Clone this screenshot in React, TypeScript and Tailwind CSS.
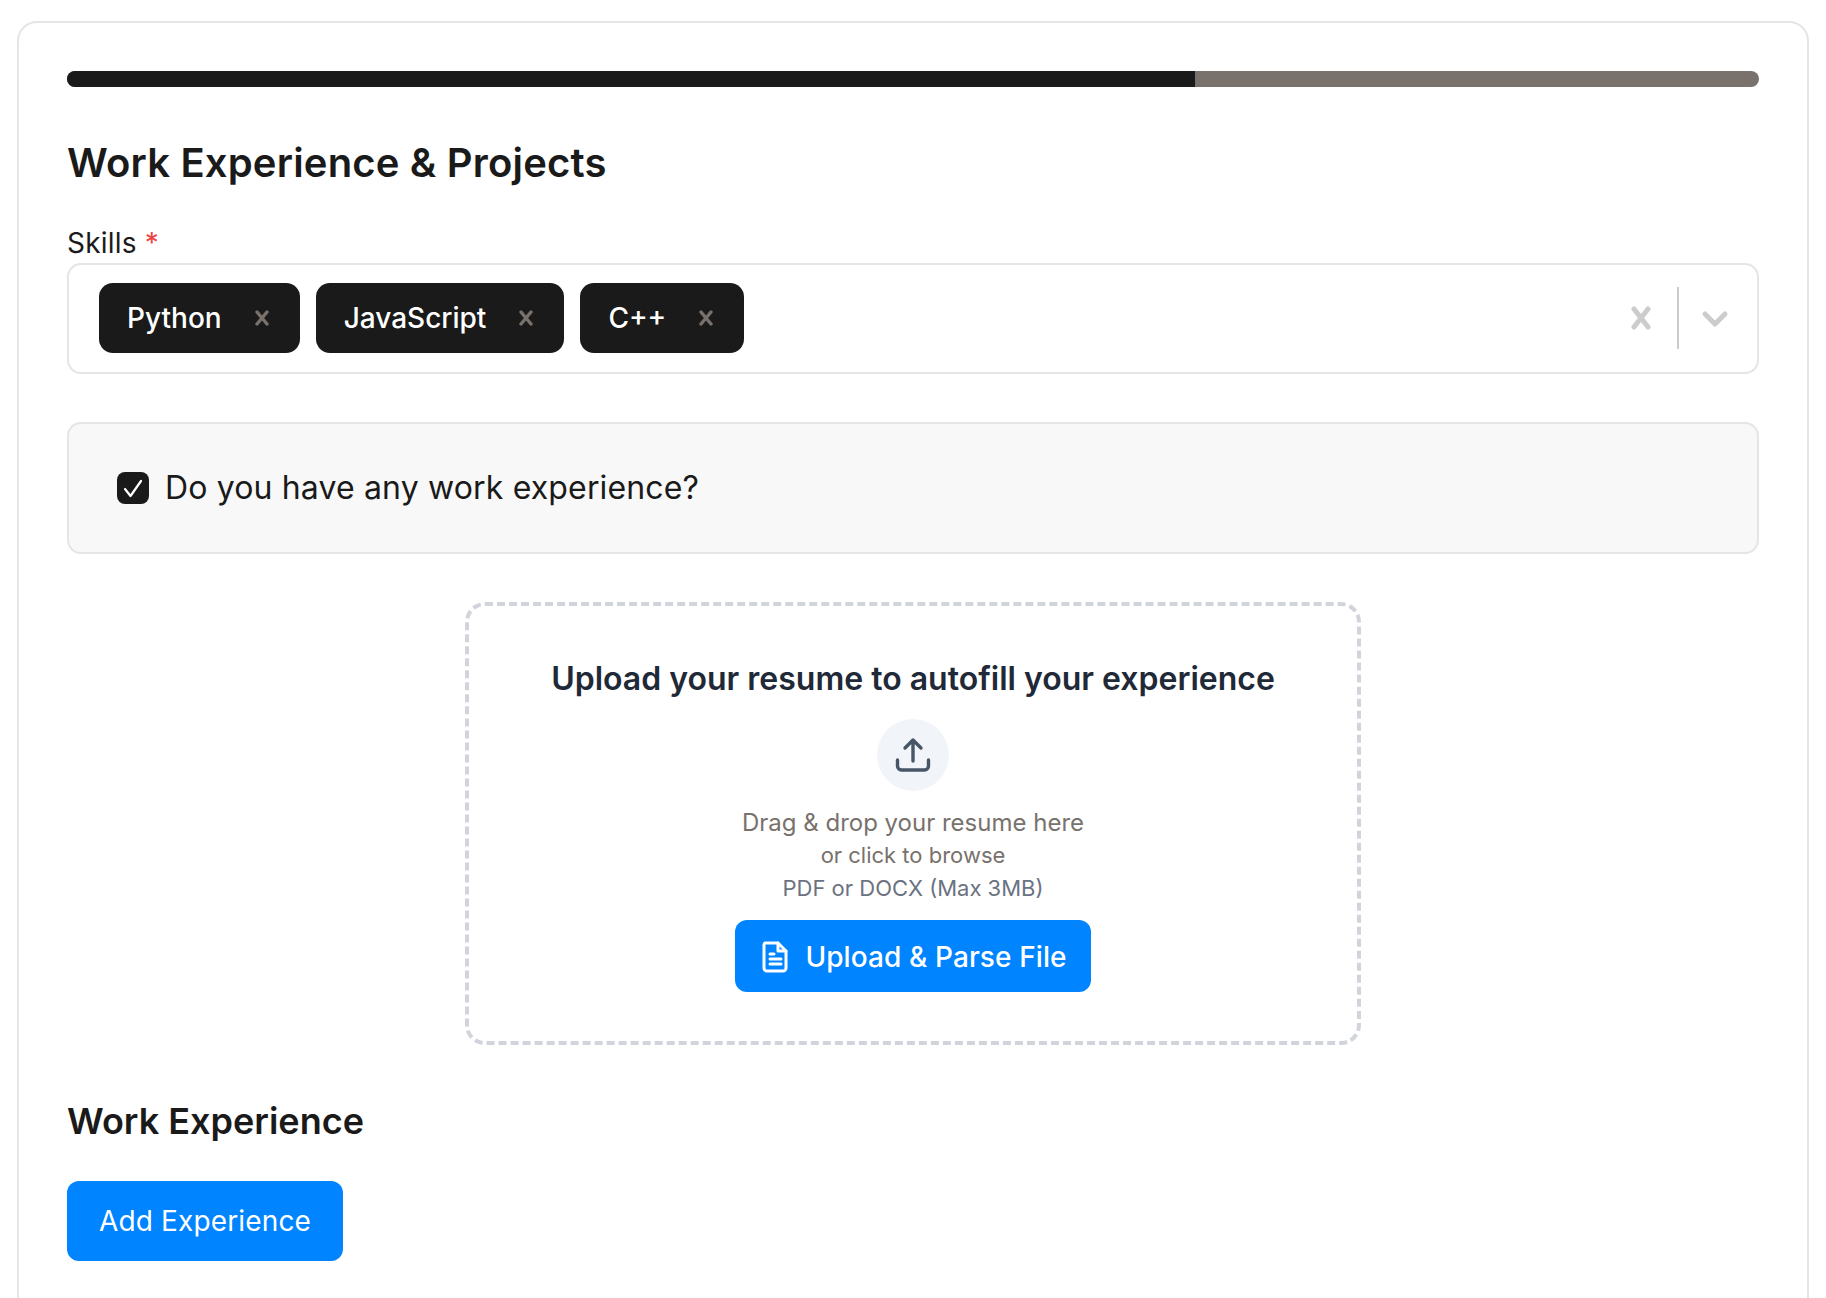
import React from "react";

function ChipX() {
  return (
    <svg width="14" height="16" viewBox="0 0 14 16" fill="none" stroke="#78716c" strokeWidth="3.4" strokeLinecap="round" className="ml-[33px]">
      <path d="M2 2 L12 14 M12 2 L2 14" />
    </svg>
  );
}

function Chip({ label }: { label: string }) {
  return (
    <div className="flex h-[70px] items-center rounded-[14px] bg-[#1a1a1a] pl-[28px] pr-[31px] text-[28px] font-medium text-white">
      <span>{label}</span>
      <ChipX />
    </div>
  );
}

export default function App() {
  return (
    <div className="h-[1298px] overflow-hidden bg-white pt-[21px] font-['Inter',sans-serif] text-[#1a1a1a]">
      <div className="mx-auto min-h-[1400px] w-[1792px] rounded-[20px] border-2 border-[#e5e5e5] p-[48px]">
        <div className="flex h-[16px] w-full overflow-hidden rounded-full bg-[#78716c]">
          <div className="h-full w-[66.67%] bg-[#1a1a1a]" />
        </div>

        <h1 className="mt-[46px] text-[40px] leading-[60px] font-semibold tracking-[0.18px]">Work Experience &amp; Projects</h1>

        <label className="mt-[31px] block text-[28px] leading-[39px] tracking-[0.2px]">
          Skills <span className="text-[#ef4444]">*</span>
        </label>

        <div className="flex h-[111px] items-center justify-between rounded-[14px] border-2 border-[#e5e5e5] pb-[1px] pl-[30px] pr-[28px]">
          <div className="flex gap-[16px]">
            <Chip label="Python" />
            <Chip label="JavaScript" />
            <Chip label="C++" />
          </div>
          <div className="flex items-center">
            <svg width="22" height="24" viewBox="0 0 22 24" fill="none" stroke="#cccccc" strokeWidth="5" strokeLinecap="round">
              <path d="M4 3 L18 21 M18 3 L4 21" />
            </svg>
            <div className="ml-[25px] h-[62px] w-[2px] bg-[#cccccc]" />
            <svg width="28" height="18" viewBox="0 0 28 18" fill="none" stroke="#cccccc" strokeWidth="5" strokeLinecap="round" strokeLinejoin="round" className="ml-[22px] mt-[2px]">
              <path d="M4 4 L14 14 L24 4" />
            </svg>
          </div>
        </div>

        <div className="mt-[48px] flex h-[132px] items-center rounded-[14px] border-2 border-[#e5e5e5] bg-[#f8f8f8] pl-[48px]">
          <div className="flex h-[32px] w-[32px] items-center justify-center rounded-[8px] bg-[#1a1a1a]">
            <svg width="24" height="24" viewBox="0 0 24 24" fill="none" stroke="white" strokeWidth="2.2" strokeLinecap="round" strokeLinejoin="round">
              <path d="M4 13 L9.5 20 L20 5" />
            </svg>
          </div>
          <span className="ml-[16px] text-[32px] leading-[48px] tracking-[0.15px]">Do you have any work experience?</span>
        </div>

        <div className="mx-auto mt-[48px] flex h-[443px] w-[896px] flex-col items-center rounded-[20px] border-4 border-dashed border-[#d1d5db] pt-[49px]">
          <h2 className="text-[32px] leading-[48px] font-semibold text-[#1f2937]">Upload your resume to autofill your experience</h2>
          <div className="mt-[16px] flex h-[72px] w-[72px] items-center justify-center rounded-full bg-[#f1f5f9]">
            <svg width="36" height="36" viewBox="0 0 36 36" fill="none" stroke="#475569" strokeWidth="3.4" strokeLinecap="round" strokeLinejoin="round">
              <path d="M18 24 V3 M10 11 L18 3 L26 11" />
              <path d="M2.5 23 V29 a4 4 0 0 0 4 4 H29.5 a4 4 0 0 0 4 -4 V23" />
            </svg>
          </div>
          <p className="mt-[16px] text-[24px] leading-[32px] text-[#78716c]">Drag &amp; drop your resume here</p>
          <p className="text-[22px] leading-[33px] text-[#78716c]">or click to browse</p>
          <p className="text-[22px] leading-[32px] text-[#6b7280]">PDF or DOCX (Max 3MB)</p>
          <button className="mt-[16px] flex h-[72px] w-[356px] items-center justify-center rounded-[12px] bg-[#0084ff] pl-[2px] pt-[1px] text-[28px] font-medium tracking-[0.1px] text-white">
            <svg width="28" height="32" viewBox="0 0 28 32" fill="none" stroke="white" strokeWidth="3" strokeLinecap="round" strokeLinejoin="round" className="mr-[16px]">
              <path d="M4 2 H17 L25 10 V27 a3 3 0 0 1 -3 3 H6 a3 3 0 0 1 -3 -3 V5 a3 3 0 0 1 1 -3 Z" />
              <path d="M17 2 V10 H25" />
              <path d="M9 13 H13 M9 18 H20 M9 23 H20" />
            </svg>
            Upload &amp; Parse File
          </button>
        </div>

        <h2 className="mt-[49px] text-[36px] leading-[54px] font-semibold">Work Experience</h2>

        <button className="mt-[33px] flex h-[80px] w-[276px] items-center justify-center rounded-[12px] bg-[#0084ff] text-[28px] tracking-[0.15px] text-white">
          Add Experience
        </button>
      </div>
    </div>
  );
}
